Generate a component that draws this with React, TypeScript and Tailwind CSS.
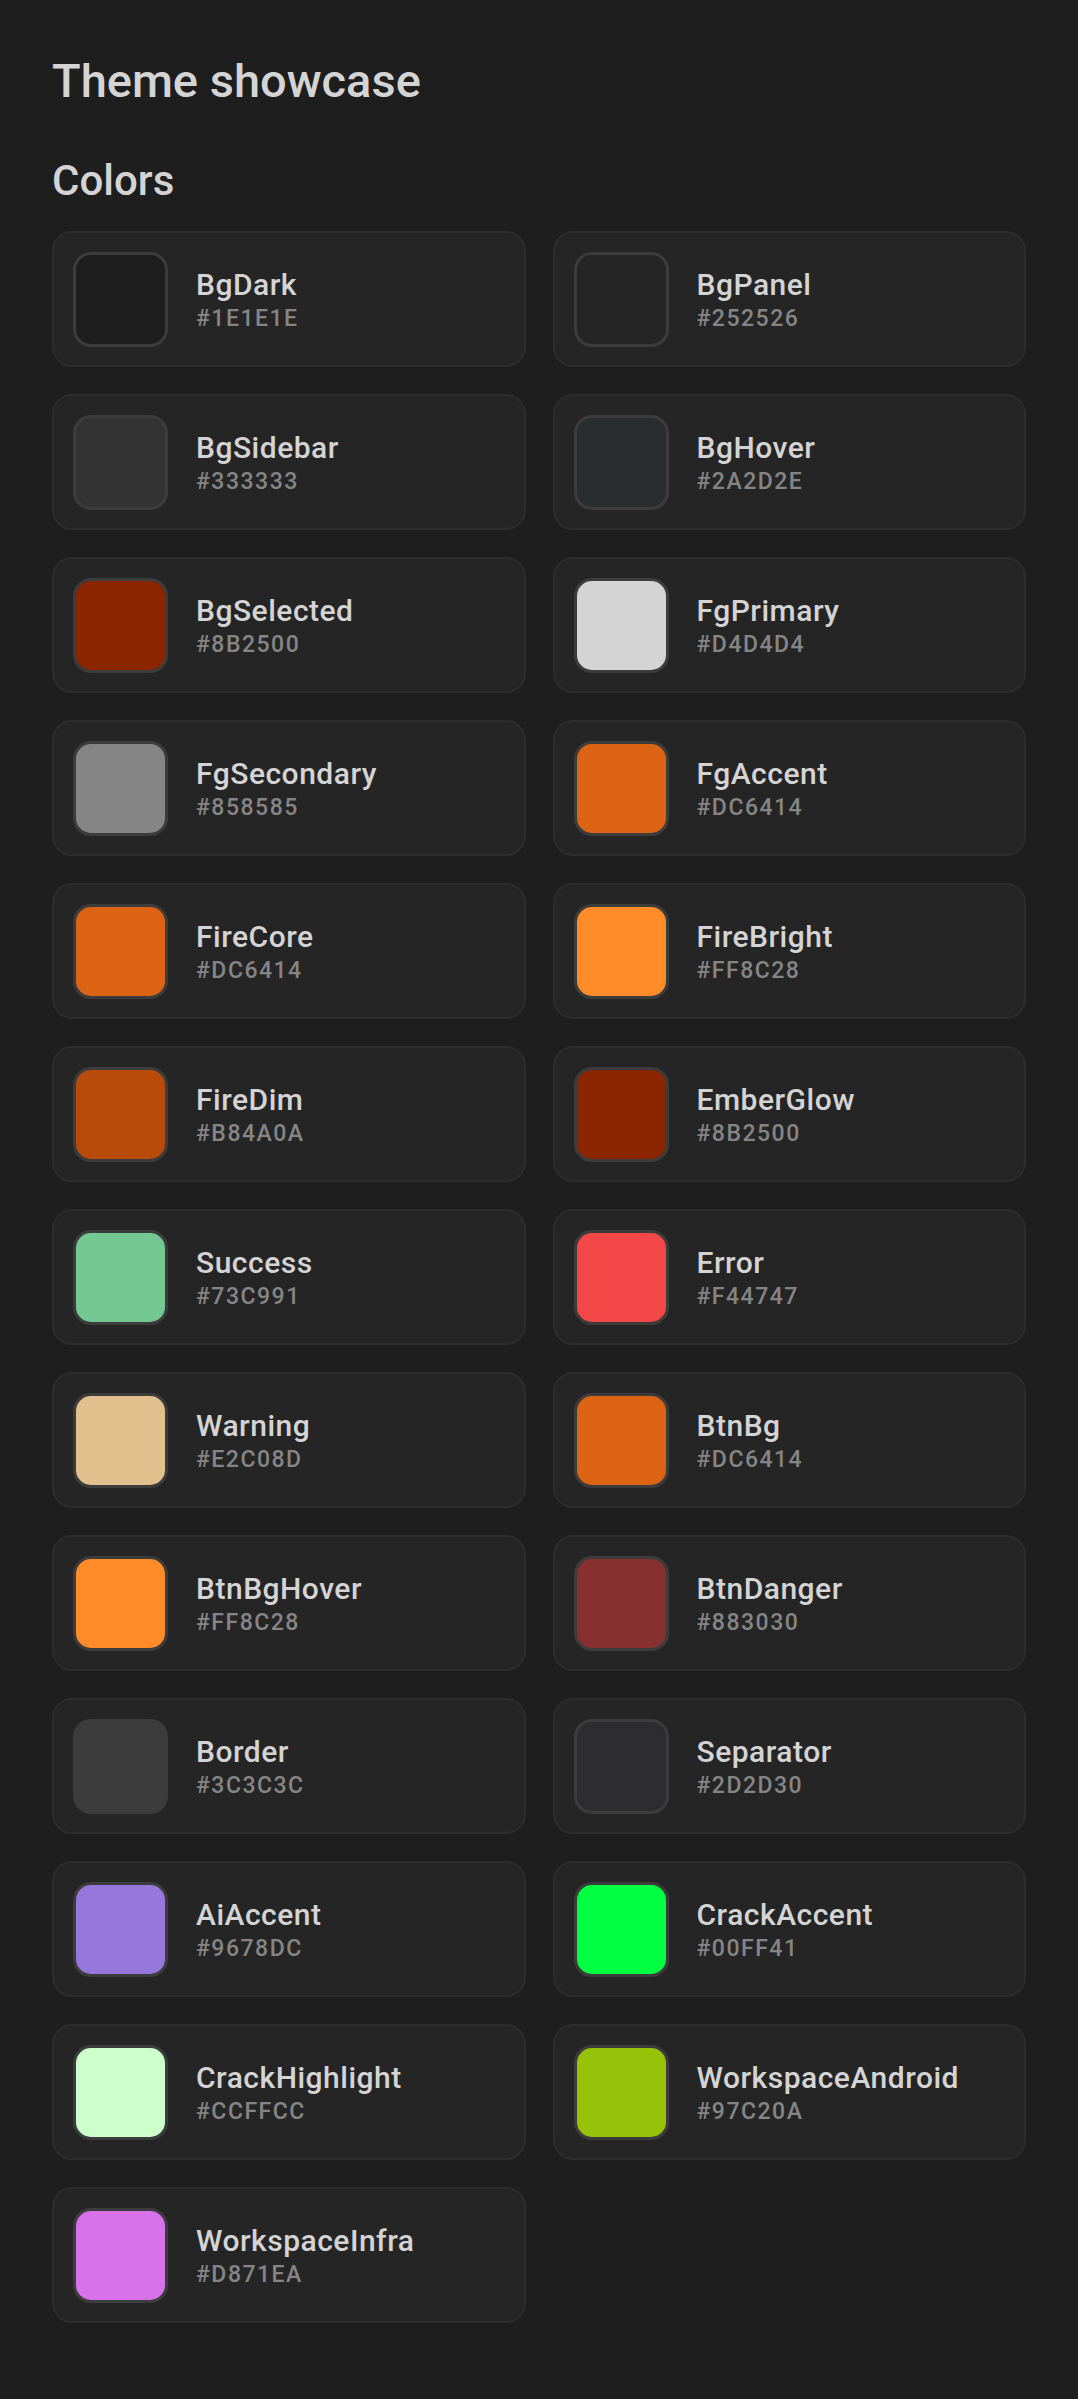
const colors = [
  { name: "BgDark", hex: "#1E1E1E", swatch: "bg-[#1e1e1e]" },
  { name: "BgPanel", hex: "#252526", swatch: "bg-[#252526]" },
  { name: "BgSidebar", hex: "#333333", swatch: "bg-[#333333]" },
  { name: "BgHover", hex: "#2A2D2E", swatch: "bg-[#2a2d2e]" },
  { name: "BgSelected", hex: "#8B2500", swatch: "bg-[#8b2500]" },
  { name: "FgPrimary", hex: "#D4D4D4", swatch: "bg-[#d4d4d4]" },
  { name: "FgSecondary", hex: "#858585", swatch: "bg-[#858585]" },
  { name: "FgAccent", hex: "#DC6414", swatch: "bg-[#dc6414]" },
  { name: "FireCore", hex: "#DC6414", swatch: "bg-[#dc6414]" },
  { name: "FireBright", hex: "#FF8C28", swatch: "bg-[#ff8c28]" },
  { name: "FireDim", hex: "#B84A0A", swatch: "bg-[#b84a0a]" },
  { name: "EmberGlow", hex: "#8B2500", swatch: "bg-[#8b2500]" },
  { name: "Success", hex: "#73C991", swatch: "bg-[#73c991]" },
  { name: "Error", hex: "#F44747", swatch: "bg-[#f44747]" },
  { name: "Warning", hex: "#E2C08D", swatch: "bg-[#e2c08d]" },
  { name: "BtnBg", hex: "#DC6414", swatch: "bg-[#dc6414]" },
  { name: "BtnBgHover", hex: "#FF8C28", swatch: "bg-[#ff8c28]" },
  { name: "BtnDanger", hex: "#883030", swatch: "bg-[#883030]" },
  { name: "Border", hex: "#3C3C3C", swatch: "bg-[#3c3c3c]" },
  { name: "Separator", hex: "#2D2D30", swatch: "bg-[#2d2d30]" },
  { name: "AiAccent", hex: "#9678DC", swatch: "bg-[#9678dc]" },
  { name: "CrackAccent", hex: "#00FF41", swatch: "bg-[#00ff41]" },
  { name: "CrackHighlight", hex: "#CCFFCC", swatch: "bg-[#ccffcc]" },
  { name: "WorkspaceAndroid", hex: "#97C20A", swatch: "bg-[#97c20a]" },
  { name: "WorkspaceInfra", hex: "#D871EA", swatch: "bg-[#d871ea]" },
];

export default function App() {
  return (
    <div
      className="min-h-[2399px] w-full bg-[#1e1e1e] px-[52px] pt-[53px] pb-16 text-[#d4d4d4]"
      style={{ fontFamily: "Roboto, 'Noto Sans', sans-serif" }}
    >
      <h1 className="text-[47px] font-medium leading-[55px]">Theme showcase</h1>
      <h2 className="mt-[48px] text-[42px] font-medium leading-[49px]">Colors</h2>

      <div className="mt-[26px] grid grid-cols-2 gap-[27px]">
        {colors.map((c) => (
          <div
            key={c.name}
            className="flex h-[136px] items-center gap-[28px] rounded-[20px] border-2 border-[#2d2d2d] bg-[#252526] px-[19px]"
          >
            <div
              className={`h-[95px] w-[95px] shrink-0 rounded-[18px] border-[3px] border-[#3c3c3c] ${c.swatch}`}
            />
            <div className="flex flex-col">
              <span className="text-[30px] font-medium leading-[35px] tracking-[0.5px] text-[#d4d4d4]">
                {c.name}
              </span>
              <span className="mt-[4px] text-[23px] font-medium leading-[26px] tracking-[1.5px] text-[#858585]">
                {c.hex}
              </span>
            </div>
          </div>
        ))}
      </div>
    </div>
  );
}
